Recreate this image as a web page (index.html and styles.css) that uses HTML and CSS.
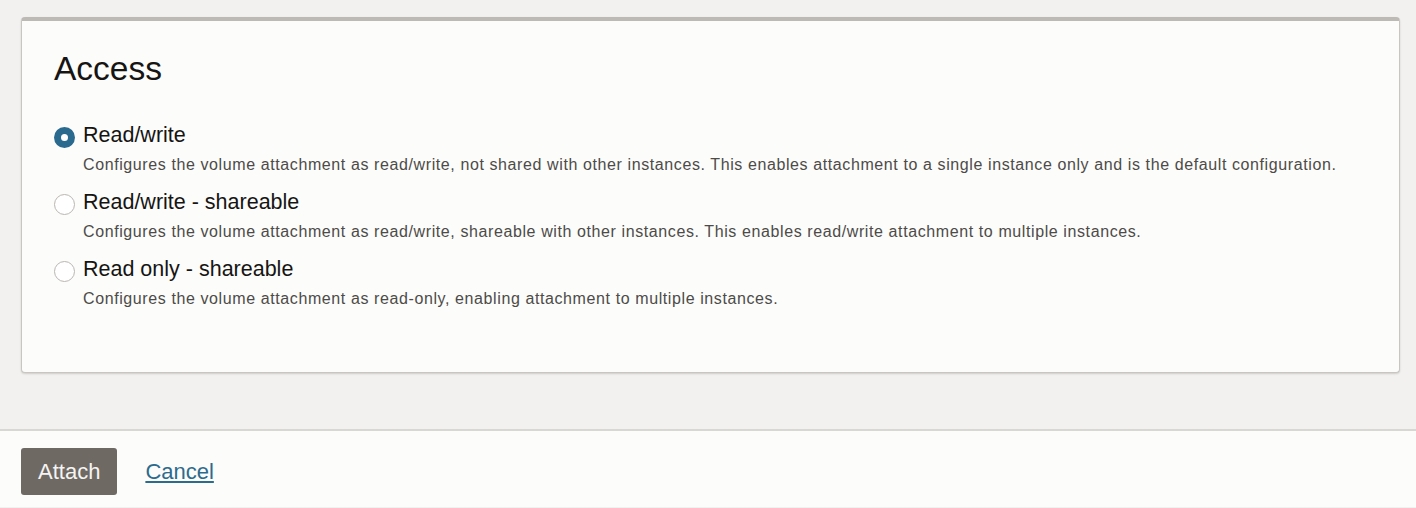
FILE: index.html
```html
<!DOCTYPE html>
<html lang="en">
<head>
    <meta charset="UTF-8">
    <title>Attach block volume</title>
    <link rel="stylesheet" href="styles.css">
</head>
<body>
    <div class="page">
        <div class="panel">
            <h2>Access</h2>
            <div class="option">
                <label class="choice">
                    <input type="radio" name="access" checked>
                    <span class="radio"></span>
                    <span class="label-text">Read/write</span>
                </label>
                <p class="help">Configures the volume attachment as read/write, not shared with other instances. This enables attachment to a single instance only and is the default configuration.</p>
            </div>
            <div class="option">
                <label class="choice">
                    <input type="radio" name="access">
                    <span class="radio"></span>
                    <span class="label-text">Read/write - shareable</span>
                </label>
                <p class="help">Configures the volume attachment as read/write, shareable with other instances. This enables read/write attachment to multiple instances.</p>
            </div>
            <div class="option">
                <label class="choice">
                    <input type="radio" name="access">
                    <span class="radio"></span>
                    <span class="label-text">Read only - shareable</span>
                </label>
                <p class="help">Configures the volume attachment as read-only, enabling attachment to multiple instances.</p>
            </div>
        </div>
    </div>
    <div class="footer">
        <button type="button" class="primary">Attach</button>
        <a href="#" class="cancel">Cancel</a>
    </div>
</body>
</html>
```

FILE: styles.css
```css
body {
    margin: 0;
    font-family: "Liberation Sans", Arial, sans-serif;
    background-color: #f2f1f0;
    color: #161513;
}
.page {
    padding: 17px 16px 56px 21px;
}
.panel {
    background: #fcfcfb;
    border: 1px solid #c9c6c2;
    border-top: 4px solid #bdb9b5;
    border-radius: 4px;
    box-shadow: 0 1px 2px rgba(0, 0, 0, 0.15);
    padding: 28px 32px 52px 32px;
    height: 271px;
}
h2 {
    margin: 0 0 32px 0;
    font-size: 33.5px;
    font-weight: normal;
    line-height: 40px;
    color: #161513;
}
.option {
    margin-bottom: 11px;
}
.choice {
    display: flex;
    align-items: center;
    cursor: pointer;
}
.choice input {
    display: none;
}
.radio {
    width: 21px;
    height: 21px;
    border: 1px solid #bab6b2;
    border-radius: 50%;
    background: #fff;
    margin-right: 8px;
    box-sizing: border-box;
    position: relative;
    top: 2px;
}
.choice input:checked + .radio {
    border: 7px solid #2b6a8f;
    background: #fff;
}
.label-text {
    font-size: 21.5px;
    line-height: 28px;
}
.help {
    margin: 3px 0 0 29px;
    font-size: 16px;
    letter-spacing: 0.6px;
    line-height: 25px;
    color: #4d4b48;
}
.footer {
    border-top: 2px solid #d9d7d4;
    background: #fcfcfb;
    padding: 17px 21px 12px 21px;
    display: flex;
    align-items: center;
    height: 47px;
}
.primary {
    height: 47px;
    padding: 0 17px;
    background-color: #6f6964;
    color: #f5f4f2;
    border: none;
    border-radius: 3px;
    font-family: "Liberation Sans", Arial, sans-serif;
    font-size: 22px;
    cursor: pointer;
}
.cancel {
    margin-left: 28px;
    font-size: 22px;
    color: #2d6b8d;
}
```
